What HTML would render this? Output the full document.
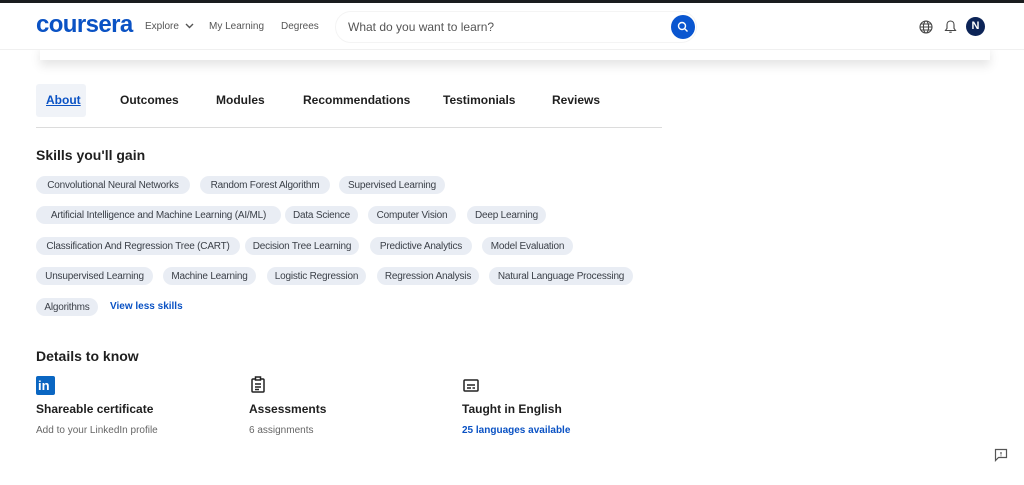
<!DOCTYPE html>
<html><head><meta charset="utf-8"><style>
*{margin:0;padding:0;box-sizing:border-box}
body{width:1024px;height:485px;background:#fff;font-family:"Liberation Sans",sans-serif;position:relative;overflow:hidden;color:#1f1f1f}
.a{position:absolute;white-space:nowrap}
.chip{position:absolute;height:18px;background:#e9edf4;border-radius:9px;font-size:10px;color:#3a3f47;text-align:center;line-height:20px;white-space:nowrap;letter-spacing:-0.2px}
.tab{position:absolute;top:93px;font-size:12px;font-weight:bold;color:#1f1f1f}
</style></head><body>
<div class="a" style="left:0;top:0;width:1024px;height:3px;background:#1a1d1f"></div>
<div class="a" style="left:40px;top:44px;width:950px;height:16px;box-shadow:0 6px 10px rgba(0,0,0,0.10);background:#fff"></div>
<div class="a" style="left:0;top:3px;width:1024px;height:47px;background:#fff;border-bottom:1px solid #f0f0f0"></div>
<div class="a" style="left:36px;top:11px;font-size:24px;font-weight:bold;color:#0a52c4;letter-spacing:-0.6px">coursera</div>
<div class="a" style="left:145px;top:21px;font-size:10px;color:#555">Explore <svg width="9" height="6" viewBox="0 0 9 6" style="margin-left:3px"><path d="M1 1l3.5 3.5L8 1" stroke="#555" stroke-width="1.4" fill="none"/></svg></div>
<div class="a" style="left:209px;top:21px;font-size:10px;color:#555">My Learning</div>
<div class="a" style="left:281px;top:21px;font-size:10px;color:#555">Degrees</div>
<div class="a" style="left:335px;top:11px;width:362px;height:32px;border:1px solid #f4f4f4;border-radius:16px"></div>
<div class="a" style="left:348px;top:20px;font-size:12px;color:#555">What do you want to learn?</div>
<div class="a" style="left:671px;top:15px;width:24px;height:24px;border-radius:50%;background:#0a56d0"></div>
<svg class="a" style="left:677px;top:21px" width="12" height="12" viewBox="0 0 12 12"><circle cx="5" cy="5" r="3.5" stroke="#fff" stroke-width="1.4" fill="none"/><path d="M7.5 7.5l3 3" stroke="#fff" stroke-width="1.4"/></svg>
<svg class="a" style="left:919px;top:20px" width="14" height="14" viewBox="0 0 14 14" fill="none" stroke="#444" stroke-width="1.1"><circle cx="7" cy="7" r="6"/><ellipse cx="7" cy="7" rx="2.6" ry="6"/><path d="M1 7h12M2 4h10M2 10h10"/></svg>
<svg class="a" style="left:944px;top:19px" width="13" height="15" viewBox="0 0 13 15" fill="none" stroke="#444" stroke-width="1.1"><path d="M6.5 2c-2.2 0-3.5 1.6-3.5 3.8v3.5L1.5 11.5h10L10 9.3V5.8C10 3.6 8.7 2 6.5 2z"/><path d="M5.3 13.2h2.4"/></svg>
<div class="a" style="left:966px;top:17px;width:19px;height:19px;border-radius:50%;background:#0c2457;color:#fff;font-size:11px;font-weight:bold;text-align:center;line-height:19px">N</div>

<div class="a" style="left:36px;top:84px;width:50px;height:33px;background:#f0f3f8;border-radius:3px"></div>
<div class="tab" style="left:46px;color:#0a52c4;text-decoration:underline">About</div>
<div class="tab" style="left:120px">Outcomes</div>
<div class="tab" style="left:216px">Modules</div>
<div class="tab" style="left:303px">Recommendations</div>
<div class="tab" style="left:443px">Testimonials</div>
<div class="tab" style="left:552px">Reviews</div>
<div class="a" style="left:36px;top:127px;width:626px;height:1px;background:#dcdcdc"></div>

<div class="a" style="left:36px;top:147px;font-size:14px;font-weight:bold">Skills you'll gain</div>
<div class="chip" style="left:36px;top:176px;width:154px">Convolutional Neural Networks</div>
<div class="chip" style="left:200px;top:176px;width:130px">Random Forest Algorithm</div>
<div class="chip" style="left:339px;top:176px;width:106px">Supervised Learning</div>
<div class="chip" style="left:36px;top:206px;width:245px">Artificial Intelligence and Machine Learning (AI/ML)</div>
<div class="chip" style="left:285px;top:206px;width:73px">Data Science</div>
<div class="chip" style="left:368px;top:206px;width:88px">Computer Vision</div>
<div class="chip" style="left:467px;top:206px;width:79px">Deep Learning</div>
<div class="chip" style="left:36px;top:237px;width:204px">Classification And Regression Tree (CART)</div>
<div class="chip" style="left:245px;top:237px;width:114px">Decision Tree Learning</div>
<div class="chip" style="left:370px;top:237px;width:102px">Predictive Analytics</div>
<div class="chip" style="left:482px;top:237px;width:91px">Model Evaluation</div>
<div class="chip" style="left:36px;top:267px;width:117px">Unsupervised Learning</div>
<div class="chip" style="left:163px;top:267px;width:93px">Machine Learning</div>
<div class="chip" style="left:267px;top:267px;width:99px">Logistic Regression</div>
<div class="chip" style="left:377px;top:267px;width:102px">Regression Analysis</div>
<div class="chip" style="left:489px;top:267px;width:144px">Natural Language Processing</div>
<div class="chip" style="left:36px;top:298px;width:62px">Algorithms</div>
<div class="a" style="left:110px;top:301px;font-size:10px;font-weight:bold;color:#0a52c4">View less skills</div>

<div class="a" style="left:36px;top:348px;font-size:14px;font-weight:bold">Details to know</div>
<div class="a" style="left:36px;top:376px;width:19px;height:19px;background:#0a66c2;border-radius:2px;color:#fff;font-size:13px;font-weight:bold;line-height:20px;padding-left:2px">in</div>
<svg class="a" style="left:250px;top:376px" width="16" height="17" viewBox="0 0 16 17" fill="none" stroke="#222" stroke-width="1.5"><rect x="2" y="3" width="12" height="13" rx="1"/><rect x="5.5" y="1" width="5" height="3" fill="#fff"/><path d="M5 8h6M5 11h6M5 13.5h4"/></svg>
<svg class="a" style="left:463px;top:379px" width="16" height="13" viewBox="0 0 16 13" fill="none" stroke="#222" stroke-width="1.5"><rect x="1" y="1" width="14" height="11" rx="1"/><path d="M4 6h8M4 9h4M9.5 9h2.5"/></svg>
<div class="a" style="left:36px;top:402px;font-size:12px;font-weight:bold">Shareable certificate</div>
<div class="a" style="left:249px;top:402px;font-size:12px;font-weight:bold">Assessments</div>
<div class="a" style="left:462px;top:402px;font-size:12px;font-weight:bold">Taught in English</div>
<div class="a" style="left:36px;top:425px;font-size:10px;color:#666">Add to your LinkedIn profile</div>
<div class="a" style="left:249px;top:425px;font-size:10px;color:#666">6 assignments</div>
<div class="a" style="left:462px;top:425px;font-size:10px;font-weight:bold;color:#0a52c4">25 languages available</div>
<svg class="a" style="left:994px;top:448px" width="14" height="14" viewBox="0 0 14 14" fill="none" stroke="#555" stroke-width="1.2"><path d="M1.5 1.5h11v8h-8l-3 3z"/><path d="M7 4v2.5M7 7.5v.8"/></svg>
</body></html>
